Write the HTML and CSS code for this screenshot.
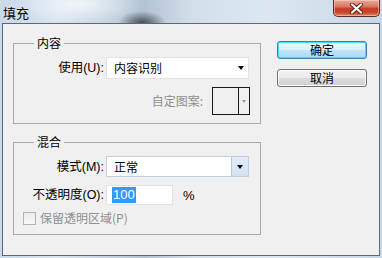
FILE: index.html
```html
<!DOCTYPE html>
<html lang="zh-CN">
<head>
<meta charset="utf-8">
<title>填充</title>
<link rel="stylesheet" href="styles.css">
</head>
<body>
<div class="window">
  <div class="titlebar">
    <span class="title">填充</span>
    <div class="close">
      <svg width="17" height="11" viewBox="0 0 17 11"><path d="M4 1.5 L13 9.5 M13 1.5 L4 9.5" stroke="#5a1a10" stroke-width="4" stroke-linecap="round"/><path d="M4 1.5 L13 9.5 M13 1.5 L4 9.5" stroke="#fff" stroke-width="2.2" stroke-linecap="round"/></svg>
    </div>
  </div>
  <div class="client">
    <div class="groups">
      <fieldset class="group g1">
        <legend>内容</legend>
        <div class="row">
          <label class="lbl">使用(U):</label>
          <div class="combo">
            <span class="combo-text">内容识别</span>
            <span class="arrow"></span>
          </div>
        </div>
        <div class="pattern-row">
          <span class="lbl-dis">自定图案:</span>
          <div class="swatch">
            <div class="swatch-box"></div>
            <div class="swatch-btn"><span class="arrow small"></span></div>
          </div>
        </div>
      </fieldset>
      <fieldset class="group g2">
        <legend>混合</legend>
        <div class="row">
          <label class="lbl">模式(M):</label>
          <div class="combo combo2">
            <span class="combo-text">正常</span>
            <span class="drop"><span class="arrow"></span></span>
          </div>
        </div>
        <div class="row row-op">
          <label class="lbl">不透明度(O):</label>
          <div class="input"><span class="sel">100</span></div>
          <span class="pct">%</span>
        </div>
        <div class="check-row">
          <span class="checkbox"></span>
          <span class="lbl-dis">保留透明区域(P)</span>
        </div>
      </fieldset>
    </div>
    <div class="buttons">
      <button class="btn default">确定</button>
      <button class="btn">取消</button>
    </div>
  </div>
</div>
</body>
</html>
```
FILE: styles.css
```css
* { box-sizing: border-box; }
html, body { margin: 0; padding: 0; }
body {
  width: 382px; height: 258px; overflow: hidden;
  font-family: "Liberation Sans", "Noto Sans CJK SC", sans-serif;
  font-size: 12px; color: #000;
}
.window {
  width: 382px; height: 258px;
  display: flex; flex-direction: column;
  background:
    radial-gradient(ellipse 24px 12px at 142px 23px, rgba(50,58,66,0.85), rgba(50,58,66,0) 100%),
    radial-gradient(ellipse 60px 20px at 80px 4px, rgba(255,255,255,0.7), rgba(255,255,255,0) 100%),
    linear-gradient(to right, #c9d9e8 0%, #d8e5f0 15%, #c2d1df 30%, #b3c3d2 38%, #d2dfeb 50%, #dce7f1 70%, #c8d8e8 100%);
}
.titlebar {
  height: 23px; flex: none;
  display: flex; align-items: flex-start;
  padding-right: 2px;
}
.title {
  font-family: "Noto Sans CJK SC", sans-serif;
  font-size: 13px; line-height: 14px;
  margin: 6px 0 0 3px;
  color: #000;
}
.close {
  margin-left: auto;
  width: 47px; height: 17px;
  border: 1px solid #5e2a22; border-top: none;
  border-radius: 0 0 5px 5px;
  background: linear-gradient(to bottom, #e9a899 0%, #d87a66 40%, #c43b22 55%, #c84a2e 80%, #df8a6a 100%);
  box-shadow: inset 0 0 0 1px rgba(255,220,210,0.5);
  display: flex; align-items: center; justify-content: center;
}
.close svg { display: block; }
.client {
  flex: 1;
  margin: 0 2px 2px 2px;
  border: 1px solid #5a6877;
  background: #f0f0f0;
  display: flex; align-items: flex-start;
  padding: 12px 0 0 10px;
  gap: 16px;
}
.groups { width: 248px; display: flex; flex-direction: column; gap: 11px; }
.group {
  margin: 0; min-width: 0;
  border: 1px solid #a9a9a9;
  border-radius: 0;
}
.group legend {
  margin-left: 20px;
  padding: 0 3px;
  line-height: 14px; height: 14px;
  font-family: "Noto Sans CJK SC", sans-serif;
  font-size: 12px;
}
.g1 { padding: 7px 10px 8px 0; display: flex; flex-direction: column; gap: 8px; }
.g2 { padding: 7px 10px 9px 0; display: flex; flex-direction: column; }
.row { display: flex; align-items: center; }
.lbl { width: 92px; text-align: right; padding-right: 2px; line-height: 14px; font-size: 12.5px; }
.combo {
  width: 143px; height: 22px;
  background: #fff;
  border: 1px solid #e3e3e3;
  display: flex; align-items: center;
  padding-left: 7px;
  position: relative;
}
.combo-text { font-family: "Noto Sans CJK SC", sans-serif; font-size: 12px; flex: 1; line-height: 14px; }
.arrow {
  width: 0; height: 0;
  border-left: 3.5px solid transparent; border-right: 3.5px solid transparent;
  border-top: 4px solid #000;
  margin-right: 4px;
}
.arrow.small { border-top-color: #999; border-left-width: 2.5px; border-right-width: 2.5px; border-top-width: 3px; margin: 0; }
.pattern-row { display: flex; justify-content: flex-end; align-items: center; gap: 9px; }
.lbl-dis { color: #8f8f8f; font-family: "Noto Sans CJK SC", sans-serif; line-height: 14px; }
.swatch {
  width: 38px; height: 28px;
  border: 1px solid #1a1a1a;
  display: flex; background: #f0f0f0;
}
.swatch-box { width: 26px; border-right: 1px solid #1a1a1a; }
.swatch-btn { flex: 1; display: flex; align-items: center; justify-content: center; }
.combo2 { height: 21px; border-color: #c4cfdb; padding-right: 0; }
.drop {
  width: 17px; height: 19px;
  background: linear-gradient(#e2ecf7, #d2e2f3);
  border-left: 1px solid #b7c7d9;
  display: flex; align-items: center; justify-content: center;
}
.drop .arrow { margin: 0; }
.row-op { margin-top: 8px; }
.input {
  width: 67px; height: 20px;
  background: #fff; border: 1px solid #e3e3e3;
  padding-left: 5px;
  display: flex; align-items: center;
}
.sel {
  background: #3399ff; color: #fff;
  font-family: "Liberation Sans", sans-serif;
  font-size: 13px; line-height: 16px; padding: 0 1px;
}
.pct { margin-left: 10px; font-size: 13px; }
.check-row { display: flex; align-items: center; gap: 4px; margin-top: 6px; padding-left: 9px; }
.checkbox {
  width: 13px; height: 13px;
  border: 1px solid #b3b3b3;
  background: linear-gradient(#ececec, #f8f8f8);
}
.buttons { display: flex; flex-direction: column; gap: 10px; margin-top: 5px; }
.btn {
  width: 90px; height: 18px;
  font-family: "Noto Sans CJK SC", sans-serif;
  font-size: 12px; line-height: 14px;
  padding: 0; margin: 0;
  border: 1px solid #707070; border-radius: 3px;
  background: linear-gradient(#f2f2f2 0%, #ebebeb 50%, #dddddd 51%, #cfcfcf 100%);
  color: #000;
  box-shadow: inset 0 0 0 1px #fcfcfc;
}
.btn.default {
  border-color: #3c7fb1;
  background: linear-gradient(#eaf6fd 0%, #d9f0fc 50%, #bee6fd 51%, #a7d9f5 100%);
  box-shadow: inset 0 0 0 1px #48d8fb;
}
```
